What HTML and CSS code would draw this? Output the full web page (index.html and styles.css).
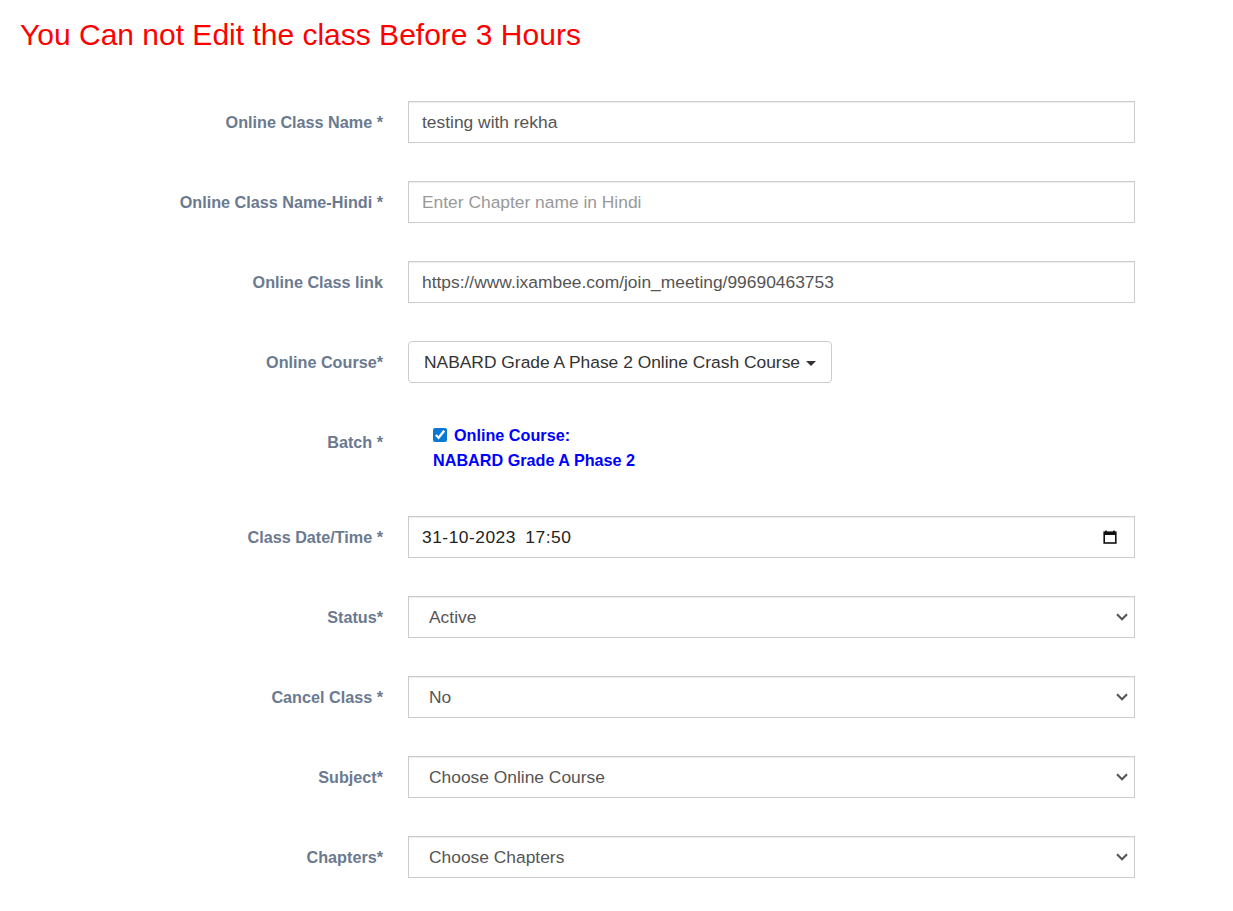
FILE: index.html
```html
<!DOCTYPE html>
<html lang="en">
<head>
<meta charset="utf-8">
<title>Edit Online Class</title>
<link rel="stylesheet" href="styles.css">
</head>
<body>
<div class="page">
  <h1 class="warning">You Can not Edit the class Before 3 Hours</h1>
  <form class="form">
    <label class="label">Online Class Name *</label>
    <div class="field"><input class="control" type="text" value="testing with rekha"></div>

    <label class="label">Online Class Name-Hindi *</label>
    <div class="field"><input class="control" type="text" placeholder="Enter Chapter name in Hindi"></div>

    <label class="label">Online Class link</label>
    <div class="field"><input class="control" type="text" value="https://www.ixambee.com/join_meeting/99690463753"></div>

    <label class="label">Online Course*</label>
    <div class="field"><button type="button" class="dropdown-btn">NABARD Grade A Phase 2 Online Crash Course <span class="caret"></span></button></div>

    <label class="label">Batch *</label>
    <div class="field batch">
      <div class="batch-line"><input type="checkbox" class="check" checked><span>Online Course:</span></div>
      <div class="batch-line">NABARD Grade A Phase 2</div>
    </div>

    <label class="label">Class Date/Time *</label>
    <div class="field">
      <div class="control datetime">
        <span>31-10-2023 17:50</span>
        <svg class="cal" width="14" height="14" viewBox="0 0 14 14"><path d="M3 0.5v2M11 0.5v2" stroke="#111" stroke-width="1.6"/><rect x="1.2" y="2.2" width="11.6" height="10.8" fill="none" stroke="#111" stroke-width="1.6"/><rect x="1.2" y="2.2" width="11.6" height="2.8" fill="#111"/></svg>
      </div>
    </div>

    <label class="label">Status*</label>
    <div class="field select-wrap"><select class="control select"><option>Active</option></select><svg class="chevron" width="12" height="8" viewBox="0 0 12 8"><path d="M1 1.2l5 5 5-5" fill="none" stroke="#555" stroke-width="2.1"/></svg></div>

    <label class="label">Cancel Class *</label>
    <div class="field select-wrap"><select class="control select"><option>No</option></select><svg class="chevron" width="12" height="8" viewBox="0 0 12 8"><path d="M1 1.2l5 5 5-5" fill="none" stroke="#555" stroke-width="2.1"/></svg></div>

    <label class="label">Subject*</label>
    <div class="field select-wrap"><select class="control select"><option>Choose Online Course</option></select><svg class="chevron" width="12" height="8" viewBox="0 0 12 8"><path d="M1 1.2l5 5 5-5" fill="none" stroke="#555" stroke-width="2.1"/></svg></div>

    <label class="label">Chapters*</label>
    <div class="field select-wrap"><select class="control select"><option>Choose Chapters</option></select><svg class="chevron" width="12" height="8" viewBox="0 0 12 8"><path d="M1 1.2l5 5 5-5" fill="none" stroke="#555" stroke-width="2.1"/></svg></div>
  </form>
</div>
</body>
</html>
```

FILE: styles.css
```css
html, body {
  margin: 0;
  padding: 0;
  background: #fff;
  font-family: "Liberation Sans", Arial, sans-serif;
}

.page {
  padding: 18px 20px 0 20px;
}

.warning {
  margin: 0;
  font-size: 30px;
  line-height: 33px;
  font-weight: normal;
  color: #ff0000;
}

.form {
  display: grid;
  grid-template-columns: 363px 727px;
  column-gap: 25px;
  row-gap: 38px;
  margin-top: 50px;
  align-items: start;
}

.label {
  text-align: right;
  font-size: 16.2px;
  font-weight: bold;
  line-height: 42px;
  color: #6b7a8f;
}

.field {
  min-height: 42px;
}

.control {
  box-sizing: border-box;
  width: 100%;
  height: 42px;
  margin: 0;
  padding: 0 13px;
  border: 1px solid #cccccc;
  border-radius: 0;
  background: #fff;
  box-shadow: inset 0 1px 1px rgba(0, 0, 0, 0.075);
  font-family: "Liberation Sans", Arial, sans-serif;
  font-size: 17.4px;
  color: #555555;
  outline: none;
}

.control::placeholder {
  color: #999999;
}

.select-wrap {
  position: relative;
}

.select {
  -webkit-appearance: none;
  appearance: none;
  padding: 0 34px 0 20px;
}

.chevron {
  position: absolute;
  right: 7px;
  top: 17px;
  pointer-events: none;
}

.datetime {
  display: flex;
  align-items: center;
  justify-content: space-between;
  padding: 0 17px 0 13px;
  color: #222;
  letter-spacing: 0.5px;
  word-spacing: 4px;
}

.cal {
  display: block;
}

.dropdown-btn {
  display: inline-flex;
  align-items: center;
  gap: 6px;
  box-sizing: border-box;
  height: 42px;
  margin: 0;
  padding: 0 15px 0 15px;
  border: 1px solid #cccccc;
  border-radius: 4px;
  background: #fff;
  font-family: "Liberation Sans", Arial, sans-serif;
  font-size: 17.4px;
  color: #333333;
  cursor: pointer;
}

.caret {
  display: inline-block;
  width: 0;
  height: 0;
  border-top: 5px solid #333;
  border-left: 5px solid transparent;
  border-right: 5px solid transparent;
  margin-top: 2px;
}

.batch {
  padding: 2px 0 5px 25px;
  min-height: 0;
}

.batch-line {
  display: flex;
  align-items: center;
  height: 25px;
  font-size: 16.2px;
  font-weight: bold;
  color: #0000ff;
}

.check {
  width: 14px;
  height: 14px;
  margin: 0 7px 2px 0;
  accent-color: #0b78d7;
}
```
